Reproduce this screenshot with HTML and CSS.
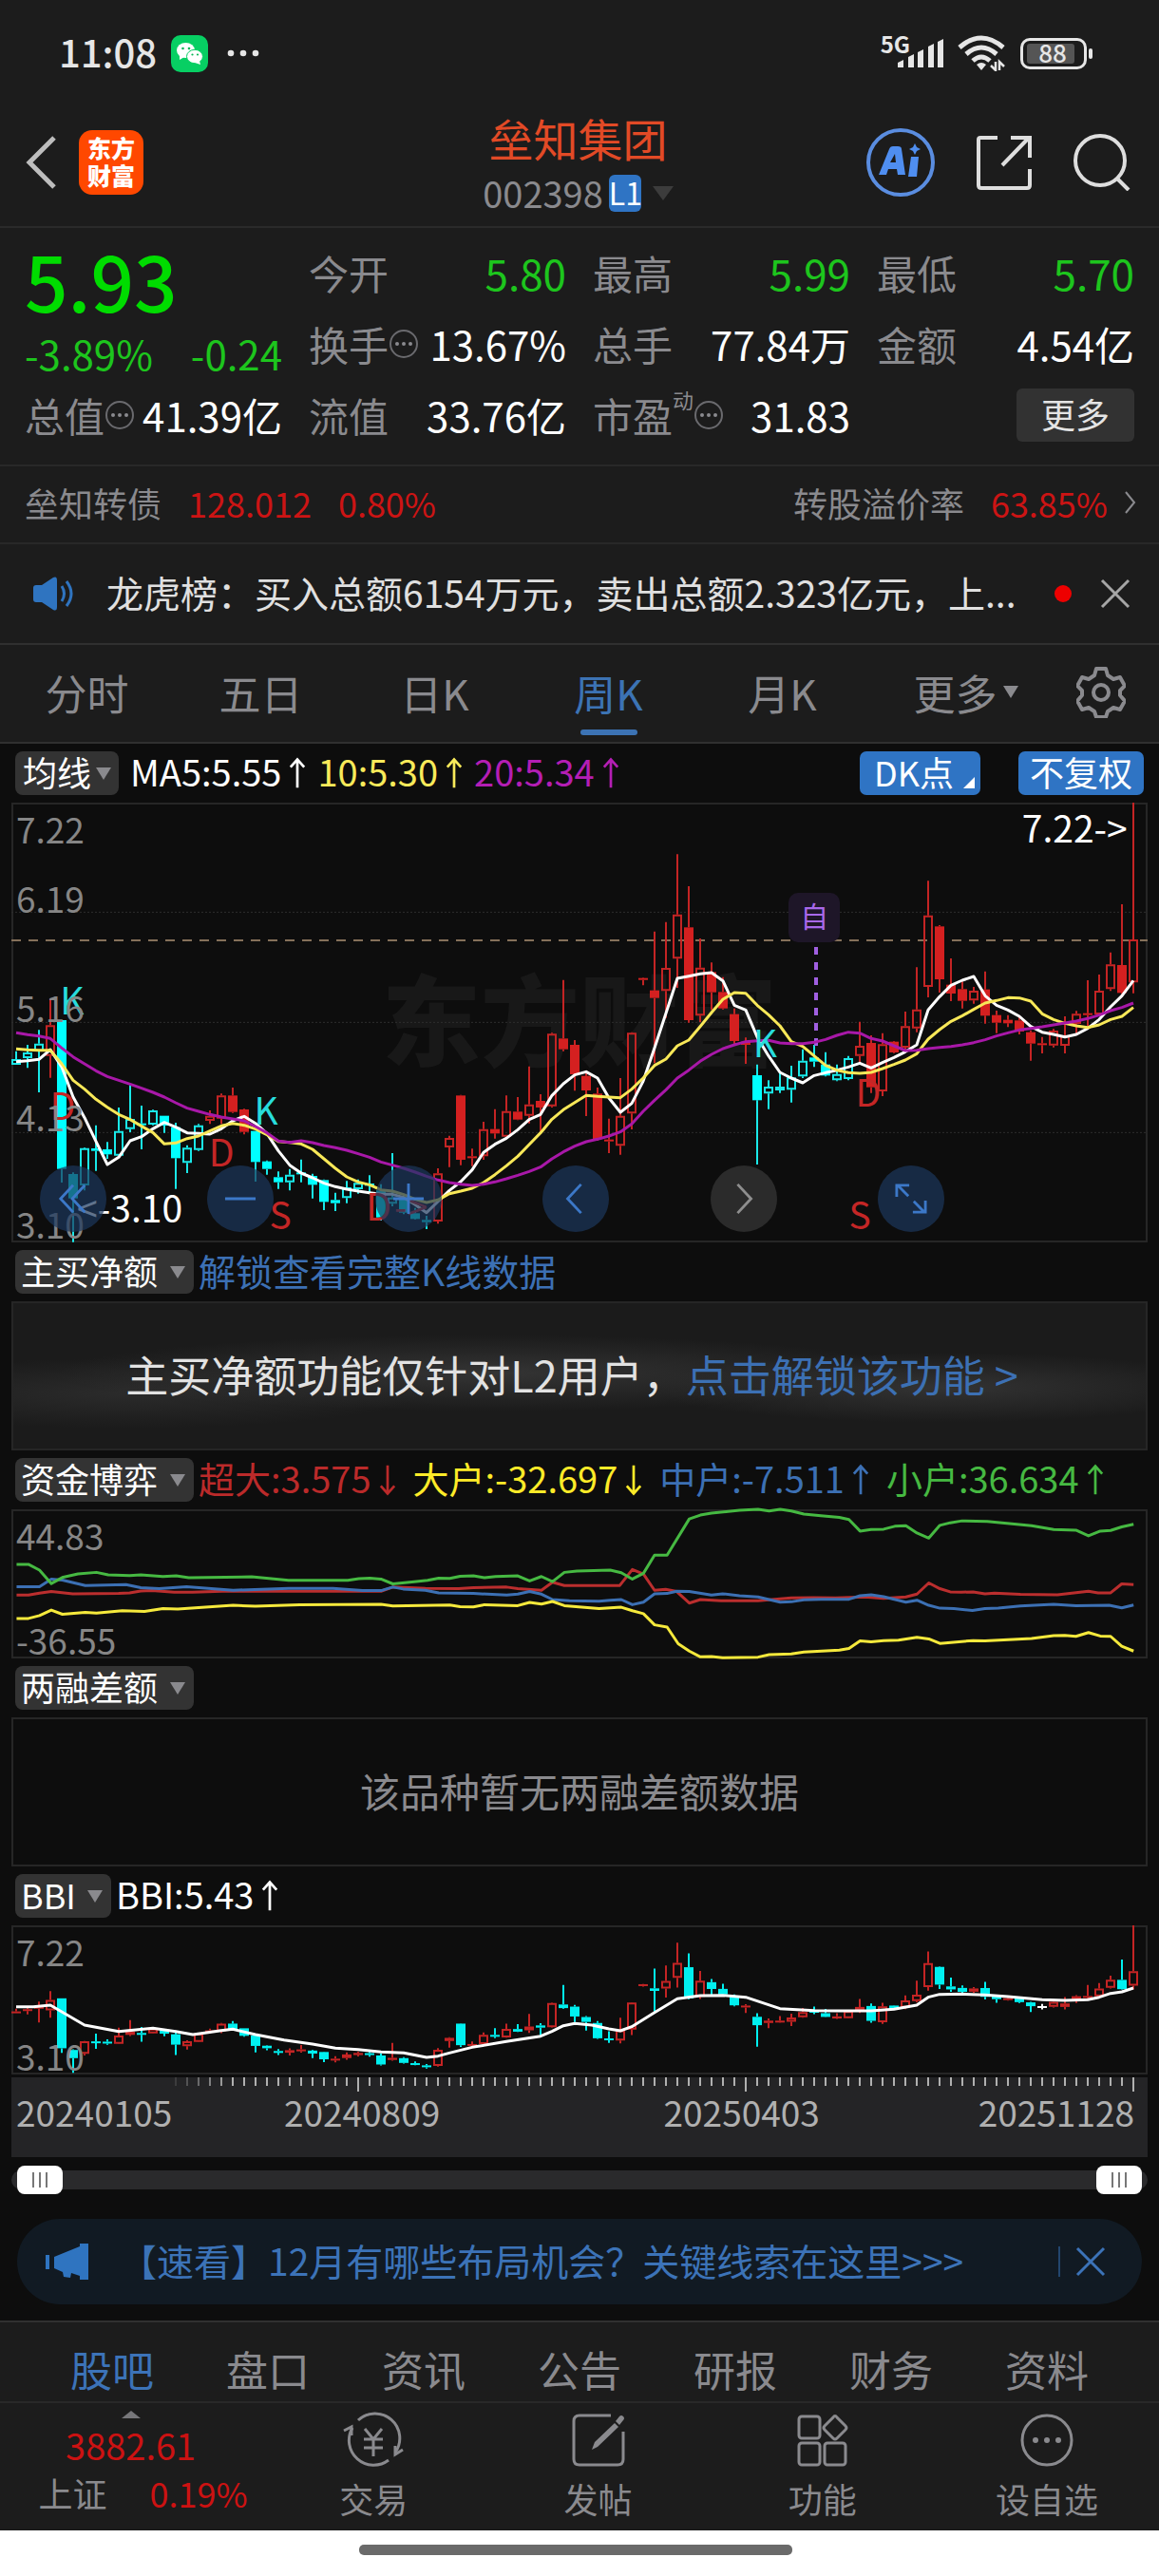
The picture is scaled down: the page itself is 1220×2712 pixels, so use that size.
FILE: index.html
```html
<!DOCTYPE html>
<html lang="zh-CN">
<head>
<meta charset="utf-8">
<meta name="viewport" content="width=device-width, initial-scale=1">
<title>垒知集团 002398</title>
<link rel="stylesheet" href="styles.css">
</head>
<body>
<svg class="defs" aria-hidden="true">
  <symbol id="up" viewBox="0 0 20 36"><path d="M10 35V2M2 11l8-9 8 9" fill="none" stroke="currentColor" stroke-width="3"/></symbol>
  <symbol id="down" viewBox="0 0 20 36"><path d="M10 1v33M2 25l8 9 8-9" fill="none" stroke="currentColor" stroke-width="3"/></symbol>
  <symbol id="info" viewBox="0 0 32 32"><circle cx="16" cy="16" r="14" fill="none" stroke="currentColor" stroke-width="2"/><circle cx="9" cy="16" r="2"/><circle cx="16" cy="16" r="2"/><circle cx="23" cy="16" r="2"/></symbol>
  <symbol id="close" viewBox="0 0 32 32"><path d="M2 2l28 28M30 2L2 30" fill="none" stroke="currentColor" stroke-width="3"/></symbol>
</svg>

<div class="statusbar">
  <span class="clock">11:08</span>
  <svg class="wechat" viewBox="0 0 39 39"><rect width="39" height="39" rx="10" fill="#07cf63"/><ellipse cx="15.500" cy="16" rx="9.500" ry="8" fill="#fff"/><path d="M9 21l0 5 5-3z" fill="#fff"/><ellipse cx="25" cy="22.500" rx="8.500" ry="7.200" fill="#fff" stroke="#07cf63"/><path d="M30 27l1 4-6-2z" fill="#fff"/><g fill="#07b757"><circle cx="12.500" cy="14" r="1.300"/><circle cx="19" cy="14" r="1.300"/><circle cx="22.500" cy="20.500" r="1.100"/><circle cx="28" cy="20.500" r="1.100"/></g></svg>
  <svg class="dots" viewBox="0 0 34 8" fill="#e6e6e6"><circle cx="4" cy="4" r="3.300"/><circle cx="17" cy="4" r="3.300"/><circle cx="30" cy="4" r="3.300"/></svg>
  <span class="net">5G</span>
  <svg class="signal" viewBox="0 0 50 32" fill="#e6e6e6"><path d="M1 31v-5l6-3v8zM12 31V20l6-3v14zM22 31V15l6-3v19zM33 31V9l6-3v25zM43 31V4l6-3v30z"/></svg>
  <svg class="wifi" viewBox="0 0 50 38"><g fill="none" stroke="#e6e6e6" stroke-width="5"><path d="M2 13Q25-7 48 13"/><path d="M9 20q16-14 32 0"/><path d="M16 27q9-8 18 0"/></g><path d="M20 31q5-4 10 0l-5 6z" fill="#e6e6e6"/><path d="M40 28v9l-5-5M44 37v-9l5 5" fill="none" stroke="#e6e6e6" stroke-width="2.500"/></svg>
  <span class="battery"><span class="battery-body"><span class="battery-fill"></span><span class="battery-num">88</span></span><i class="battery-cap"></i></span>
</div>

<header class="header">
  <div class="header-left">
    <button class="plain" aria-label="返回"><svg class="back" viewBox="0 0 32 56"><path d="M30 2L4 28l26 26" fill="none" stroke="#bdbdbd" stroke-width="5"/></svg></button>
    <a class="logo" href="#home"><span>东方</span><span>财富</span></a>
  </div>
  <div class="header-title">
    <h1>垒知集团</h1>
    <div class="code"><span>002398</span><b>L1</b><i class="tri tri-dim"></i></div>
  </div>
  <div class="header-right">
    <button class="plain" aria-label="Ai"><svg class="ico-ai" viewBox="0 0 72 72"><circle cx="36" cy="36" r="34" fill="none" stroke="#5a8de0" stroke-width="4"/><path fill-rule="evenodd" d="M13 49L24 22q1-3 4-3h5q4 0 4 3l4 27h-8l-1-6h-9l-2 6zM25 36h6l-1-9z" fill="#4f8ef0"/><path d="M47 30h8l-2 21h-9z" fill="#4f8ef0"/><path d="M51 16l2 4 4 2-4 2-2 4-2-4-4-2 4-2z" fill="#4f8ef0"/></svg></button>
    <button class="plain" aria-label="分享"><svg class="ico-share" viewBox="0 0 58 58"><path d="M22 3H4q-2 0-2 2v48q0 3 3 3h48q3 0 3-3V36M56 24V3H36M55 3L27 32" fill="none" stroke="#dedede" stroke-width="4"/></svg></button>
    <button class="plain" aria-label="搜索"><svg class="ico-search" viewBox="0 0 60 60"><circle cx="28" cy="28" r="26" fill="none" stroke="#dedede" stroke-width="4"/><path d="M46 47l12 12" stroke="#dedede" stroke-width="4"/></svg></button>
  </div>
</header>

<main>
<section class="quote">
  <div class="price-cell">
    <strong>5.93</strong>
    <p><span>-3.89%</span><span>-0.24</span></p>
  </div>
  <div class="cell"><span>今开</span><em class="green">5.80</em></div>
  <div class="cell"><span>最高</span><em class="green">5.99</em></div>
  <div class="cell"><span>最低</span><em class="green">5.70</em></div>
  <div class="cell"><span>换手<svg class="info"><use href="#info"/></svg></span><em>13.67%</em></div>
  <div class="cell"><span>总手</span><em>77.84万</em></div>
  <div class="cell"><span>金额</span><em>4.54亿</em></div>
  <div class="cell"><span>总值<svg class="info"><use href="#info"/></svg></span><em>41.39亿</em></div>
  <div class="cell"><span>流值</span><em>33.76亿</em></div>
  <div class="cell"><span>市盈<sup>动</sup><svg class="info"><use href="#info"/></svg></span><em>31.83</em></div>
  <div class="cell cell-more"><button class="more">更多</button></div>
</section>

<a class="bond" href="#bond">
  <span>垒知转债</span><em>128.012</em><em>0.80%</em>
  <span class="push">转股溢价率</span><em>63.85%</em>
  <svg class="chev" viewBox="0 0 12 24"><path d="M1 1l9 11-9 11" fill="none" stroke="#8a8a8e" stroke-width="2"/></svg>
</a>

<section class="news">
  <svg class="speaker" viewBox="0 0 44 36"><path d="M1 12q0-3 3-3h6L22 1q4-2 4 3v28q0 5-4 3L10 27H4q-3 0-3-3z" fill="#2f74c0"/><path d="M31 10q5 8 0 16M36 5q10 13 0 26" fill="none" stroke="#2f74c0" stroke-width="3"/></svg>
  <a href="#news">龙虎榜：买入总额6154万元，卖出总额2.323亿元，上...</a>
  <i class="dot"></i>
  <button class="plain news-close" aria-label="关闭"><svg><use href="#close"/></svg></button>
</section>

<nav class="period">
  <button>分时</button><button>五日</button><button>日K</button><button class="on">周K</button><button>月K</button>
  <button class="period-more">更多<i class="tri tri-small"></i></button>
  <button aria-label="设置"><svg class="gear" viewBox="0 0 52 54"><path d="M21 2h10l2 7 6 4 7-2 5 9-5 5v5l5 6-5 9-7-2-6 4-2 6H21l-2-6-6-4-7 2-5-9 5-6v-5l-5-5 5-9 7 2 6-4z" fill="none" stroke="#8a8a8e" stroke-width="4" stroke-linejoin="round"/><circle cx="26" cy="27" r="8" fill="none" stroke="#8a8a8e" stroke-width="4"/></svg></button>
</nav>

<section class="charts">
  <div class="bar">
    <label class="chip chip-tight"><select aria-label="主图指标"><option>均线</option></select></label>
    <span class="ma"><span class="c-white">MA5:5.55<svg class="arr"><use href="#up"/></svg></span><span class="c-yellow">10:5.30<svg class="arr"><use href="#up"/></svg></span><span class="c-purple">20:5.34<svg class="arr"><use href="#up"/></svg></span></span>
    <button class="blue dk">DK点</button>
    <button class="blue">不复权</button>
  </div>

  <div class="box main-box">
    <div class="watermark">东方财富</div>
    <svg id="kline" class="plot" viewBox="0 0 1196 463" preserveAspectRatio="none"></svg>
    <div id="marks"></div>
    <span class="axis a1">7.22</span><span class="axis a2">6.19</span><span class="axis a3">5.16</span><span class="axis a4">4.13</span><span class="axis bottom">3.10</span>
    <div class="tools">
      <button aria-label="最早"><svg viewBox="0 0 36 36"><path d="M18 3L4 18l14 15M31 3L17 18l14 15"/></svg></button>
      <button aria-label="缩小"><svg viewBox="0 0 36 36"><path d="M1 18h34"/></svg></button>
      <button aria-label="放大"><svg viewBox="0 0 36 36"><path d="M1 18h34M18 1v34"/></svg></button>
      <button aria-label="左移"><svg viewBox="0 0 36 36"><path d="M24 2L9 18l15 16"/></svg></button>
      <button class="off" aria-label="右移"><svg viewBox="0 0 36 36"><path d="M11 2l15 16-15 16"/></svg></button>
      <button aria-label="全屏"><svg viewBox="0 0 36 36"><path d="M2 16V3h14M3 3l12 12M34 20v13H20M33 33L21 21"/></svg></button>
    </div>
  </div>

  <div class="bar">
    <label class="chip"><select aria-label="副图指标一"><option>主买净额</option></select></label>
    <a class="unlock" href="#unlock">解锁查看完整K线数据</a>
  </div>
  <div class="box lock-box">主买净额功能仅针对L2用户，<a href="#unlock">点击解锁该功能 &gt;</a></div>

  <div class="bar">
    <label class="chip"><select aria-label="副图指标二"><option>资金博弈</option></select></label>
    <span class="fund"><span class="c-red">超大:3.575<svg class="arr"><use href="#down"/></svg></span><span class="c-yellow2">大户:-32.697<svg class="arr"><use href="#down"/></svg></span><span class="c-blue">中户:-7.511<svg class="arr"><use href="#up"/></svg></span><span class="c-green">小户:36.634<svg class="arr"><use href="#up"/></svg></span></span>
  </div>
  <div class="box">
    <svg class="plot lines" viewBox="15 60 1537 466" preserveAspectRatio="none">
      <polyline stroke="#bb2e2e" points="22,328 38,328 53,322 69,317 98,324 160,323 175,321 190,315 205,314 235,319 260,319 300,316 515,316 531,303 575,307 620,308 640,305 685,303 700,308 732,313 747,288 763,298 838,298 855,248 870,262 885,313 900,310 915,317 932,353 947,342 975,346 1025,346 1070,337 1100,336 1130,337 1170,334 1195,338 1225,334 1240,325 1256,290 1271,308 1285,318 1300,319 1316,318 1332,324 1345,322 1380,326 1430,327 1472,316 1485,321 1502,321 1517,293 1533,295"/>
      <polyline stroke="#3c70b4" points="22,302 53,302 69,278 84,281 115,298 170,295 190,305 215,308 252,302 315,313 390,307 450,307 490,314 515,314 531,303 545,309 575,313 593,321 640,323 685,328 700,325 716,317 732,325 747,342 770,346 810,347 825,344 840,342 855,358 870,350 885,324 902,323 915,316 932,317 962,328 977,324 1000,330 1025,334 1055,350 1070,349 1087,343 1110,341 1148,341 1163,330 1178,327 1195,333 1225,350 1240,344 1256,360 1271,369 1290,370 1315,376 1332,370 1350,369 1380,362 1425,357 1455,361 1500,360 1517,368 1533,359"/>
      <polyline stroke="#46b942" points="22,232 38,232 53,250 69,292 85,272 105,262 130,257 146,265 175,267 190,265 220,270 238,268 255,274 340,271 390,282 470,282 485,277 500,275 515,278 531,293 560,286 578,282 593,275 608,276 622,269 640,268 655,274 670,270 700,268 716,284 732,270 747,286 763,257 780,253 825,250 840,258 855,278 870,260 885,203 902,203 932,90 947,78 962,72 1000,63 1025,60 1040,65 1055,60 1070,65 1087,75 1110,80 1135,85 1148,92 1163,128 1178,123 1195,122 1210,113 1225,111 1240,134 1256,150 1271,110 1285,102 1301,96 1335,98 1395,111 1425,123 1455,125 1472,143 1488,128 1502,126 1517,115 1533,107"/>
      <polyline stroke="#f5e93c" points="22,401 38,401 53,392 69,375 84,388 115,382 130,384 165,377 195,379 220,370 240,372 315,360 345,363 405,358 515,357 531,362 608,359 622,364 640,365 655,358 700,361 716,351 732,356 747,348 763,361 810,370 840,366 855,377 870,386 885,421 902,428 917,480 932,503 947,521 962,520 977,524 1025,522 1040,514 1070,512 1087,506 1135,500 1148,495 1163,471 1178,474 1195,470 1215,469 1240,460 1256,465 1271,479 1316,470 1332,471 1395,464 1425,455 1440,454 1455,457 1472,445 1488,456 1502,457 1517,488 1533,503"/>
    </svg>
    <span class="axis a1">44.83</span><span class="axis bottom">-36.55</span>
  </div>

  <div class="bar"><label class="chip"><select aria-label="副图指标三"><option>两融差额</option></select></label></div>
  <div class="box empty-box">该品种暂无两融差额数据</div>

  <div class="bar">
    <label class="chip"><select aria-label="副图指标四"><option>BBI</option></select></label>
    <span class="c-white bbi">BBI:5.43<svg class="arr"><use href="#up"/></svg></span>
  </div>
  <div class="box">
    <svg id="bbi" class="plot" viewBox="0 0 1196 157" preserveAspectRatio="none"></svg>
    <span class="axis a1">7.22</span><span class="axis bottom">3.10</span>
  </div>

  <div class="timeline">
    <svg id="ticks" viewBox="0 0 1196 18" preserveAspectRatio="none"></svg>
    <div class="dates"><time>20240105</time><time>20240809</time><time>20250403</time><time>20251128</time></div>
  </div>
  <div class="range"><input type="range" aria-label="起始日期" value="0"><input type="range" aria-label="结束日期" value="100"></div>

  <div class="banner">
    <svg class="horn" viewBox="0 0 46 40"><path d="M9 15L36 4V1h9v38h-9v-4l-9-3-1 5-7-1-1-5-9-4zM0 13h4v15H0z" fill="#2f74c0"/></svg>
    <a href="#hot">【速看】12月有哪些布局机会？关键线索在这里&gt;&gt;&gt;</a>
    <button class="plain banner-close" aria-label="关闭"><svg><use href="#close"/></svg></button>
  </div>
</section>
</main>

<footer>
  <nav class="tabs"><a class="on" href="#guba">股吧</a><a href="#pankou">盘口</a><a href="#zixun">资讯</a><a href="#gonggao">公告</a><a href="#yanbao">研报</a><a href="#caiwu">财务</a><a href="#ziliao">资料</a></nav>
  <nav class="actions">
    <a class="index" href="#index"><i class="tri-up"></i><strong>3882.61</strong><span>上证<em>0.19%</em></span></a>
    <a href="#trade"><svg viewBox="0 0 66 58"><g fill="none" stroke="#8a8a8e" stroke-width="3"><path d="M17 8A26 26 0 0 1 56 42M49 50A26 26 0 0 1 11 16"/><path d="M2 19l8-4v9M64 39l-8 5v-9"/><path d="M24 17l9 11 9-11M33 28v18M23 28h20M23 37h20"/></g></svg>交易</a>
    <a href="#post"><svg viewBox="0 0 66 58"><path d="M46 3H13q-6 0-6 6v40q0 6 6 6h40q6 0 6-6V20" fill="none" stroke="#8a8a8e" stroke-width="3"/><path d="M26 39l3-8L50 11l4 4-22 21zM51 9l4-5q2-2 4 0t0 4l-4 5z" fill="#8a8a8e"/></svg>发帖</a>
    <a href="#tools"><svg viewBox="0 0 66 58"><g fill="none" stroke="#8a8a8e" stroke-width="3"><rect x="8" y="4" width="22" height="23" rx="3"/><rect x="8" y="32" width="22" height="23" rx="3"/><rect x="35" y="32" width="22" height="23" rx="3"/><path d="M44 5q2-3 4 0l9 9q2 2 0 4l-9 9q-2 2-4 0l-9-9q-2-2 0-4z"/></g></svg>功能</a>
    <a href="#watch"><svg viewBox="0 0 66 58"><circle cx="33" cy="29" r="26" fill="none" stroke="#8a8a8e" stroke-width="3"/><g fill="#8a8a8e"><circle cx="21" cy="29" r="3"/><circle cx="33" cy="29" r="3"/><circle cx="45" cy="29" r="3"/></g></svg>设自选</a>
  </nav>
</footer>
<div class="home"><i></i></div>
<script src="chart.js"></script>
</body>
</html>
```
FILE: styles.css
```css
* { box-sizing: border-box; }
html { background: #fff; }
body {
  margin: 0;
  background: #1c1c1c;
  color: #fff;
  font-family: "Noto Sans CJK SC", "Noto Sans", sans-serif;
  font-size: 36px;
  line-height: 48px;
}
button, select, input { font: inherit; color: inherit; border: 0; margin: 0; padding: 0; background: none; }
button { white-space: nowrap; }
a { color: inherit; text-decoration: none; }
em, i, time { font-style: normal; }
h1, p { margin: 0; font-weight: 400; }
svg { display: block; }
.defs { position: absolute; width: 0; height: 0; }
.plain { display: flex; }

.statusbar { display: flex; align-items: center; height: 110px; padding: 2px 70px 0 62px; color: #e6e6e6; }
.clock { font-size: 40px; font-weight: 500; width: 118px; padding-bottom: 4px; }
.wechat { width: 39px; height: 39px; }
.dots { width: 34px; height: 8px; margin-left: 20px; }
.net { margin-left: auto; font-size: 24px; line-height: 24px; font-weight: 700; padding-bottom: 20px; }
.signal { width: 50px; height: 32px; margin-left: -14px; }
.wifi { width: 50px; height: 38px; margin: 0 16px 0 14px; }
.battery { display: flex; align-items: center; gap: 2px; }
.battery-body { display: grid; width: 70px; height: 33px; border: 3px solid #e6e6e6; border-radius: 10px; padding: 3px 10px 3px 4px; }
.battery-fill, .battery-num { grid-area: 1 / 1; }
.battery-fill { background: #555; border-radius: 3px; }
.battery-num { font-size: 26px; line-height: 18px; font-weight: 500; text-align: center; padding-left: 4px; }
.battery-cap { width: 4px; height: 11px; border-radius: 2px; background: #e6e6e6; }

.header { display: grid; grid-template-columns: 1fr auto 1fr; align-items: center; height: 130px; padding: 0 30px 0 27px; border-bottom: 2px solid #2a2a2a; }
.header-left { display: flex; align-items: center; gap: 24px; padding-bottom: 6px; }
.back { width: 32px; height: 56px; }
.logo { display: flex; flex-direction: column; justify-content: center; align-items: center; width: 68px; height: 68px; border-radius: 14px; background: #ff4800; font-size: 25px; line-height: 29px; font-weight: 900; padding-bottom: 3px; }
.header-title { text-align: center; padding-bottom: 2px; }
.header-title h1 { font-size: 47px; line-height: 60px; color: #e24a26; }
.code { display: flex; align-items: center; justify-content: center; gap: 6px; font-size: 38px; line-height: 56px; color: #8a8a8e; }
.code b { width: 34px; height: 39px; border-radius: 6px; background: #2f74c4; color: #fff; font-size: 32px; line-height: 36px; font-weight: 400; }
.header-right { display: flex; align-items: center; justify-content: flex-end; gap: 44px; padding-bottom: 6px; }
.ico-ai { width: 72px; height: 72px; }
.ico-share { width: 58px; height: 58px; }
.ico-search { width: 60px; height: 60px; }

.tri { display: inline-block; border: 8px solid transparent; border-top: 13px solid #8a8a8e; border-bottom: 0; }
.tri-dim { border-width: 11px; border-top: 15px solid #3c3c3c; border-bottom: 0; margin-left: 6px; }
.tri-small { margin-left: 6px; }

.quote { display: grid; grid-template-columns: repeat(4, 1fr); grid-auto-rows: 75px; column-gap: 28px; padding: 9px 26px 15px; font-size: 42px; line-height: 56px; border-bottom: 2px solid #282828; }
.price-cell { grid-row: span 2; color: #1dc51d; padding-top: 3px; }
.price-cell strong { display: block; font-size: 80px; line-height: 84px; font-weight: 500; color: #00dc00; }
.price-cell p { display: flex; justify-content: space-between; margin-top: 8px; }
.cell { display: flex; align-items: center; justify-content: space-between; white-space: nowrap; }
.cell > span { display: flex; align-items: center; color: #8a8a8e; }
.cell sup { font-size: 22px; line-height: 22px; align-self: flex-start; }
.green { color: #1dc51d; font-size: 44px; }
.info { width: 32px; height: 32px; fill: #8a8a8e; color: #6a6a6e; }
.cell-more { justify-content: flex-end; }
.more { width: 124px; height: 56px; border-radius: 6px; background: #323232; color: #e4e4e4; font-size: 36px; line-height: 50px; padding-bottom: 4px; }

.bond { display: flex; align-items: center; gap: 28px; height: 82px; padding: 0 24px 4px 26px; color: #8a8a8e; border-bottom: 2px solid #282828; white-space: nowrap; }
.bond em { color: #cc1414; }
.push { margin-left: auto; }
.chev { width: 12px; height: 24px; margin-left: -10px; }

.news { display: flex; align-items: center; height: 106px; padding: 0 30px 0 34px; border-bottom: 2px solid #303030; color: #e0e0e0; font-size: 39px; }
.speaker { width: 44px; height: 36px; margin-right: 34px; flex: none; }
.news a { flex: 1; white-space: nowrap; padding-bottom: 5px; }
.dot { width: 18px; height: 18px; border-radius: 50%; background: #ee0000; margin: 0 30px; flex: none; }
.news-close svg { width: 32px; height: 32px; color: #a6a6a6; }

.period { display: grid; grid-template-columns: repeat(6, 3fr) 2fr; height: 104px; border-bottom: 2px solid #303030; color: #8a8a8e; font-size: 44px; }
.period button { display: flex; align-items: center; justify-content: center; padding-bottom: 3px; }
.period .period-more { padding-left: 20px; }
.period .on { color: #3c73b4; position: relative; }
.period .on::after { content: ""; position: absolute; left: calc(50% - 30px); bottom: 7px; width: 60px; height: 6px; border-radius: 3px; background: #3c73b4; }
.gear { width: 52px; height: 54px; }

.charts { background: #0d0d0d; padding: 0 12px 17px; }
.bar { display: flex; align-items: center; height: 62px; padding: 0 4px; white-space: nowrap; }
.chip { display: inline-flex; align-items: center; height: 46px; padding: 0 9px 0 6px; gap: 12px; border-radius: 8px; background: #333; margin-right: 5px; }
.chip::after { content: ""; border: 8px solid transparent; border-top: 13px solid #8a8a8e; border-bottom: 0; }
.chip select { appearance: none; height: 46px; line-height: 42px; padding-bottom: 4px; }
.chip-tight { gap: 4px; padding: 0 8px; margin-right: 12px; }
.ma { display: flex; gap: 12px; flex: 1; font-size: 38px; padding-bottom: 4px; }
.ma > span, .fund > span, .bbi { display: flex; align-items: center; gap: 8px; }
.arr { width: 18px; height: 34px; margin-top: 4px; }
.c-white { color: #fff; }
.c-yellow { color: #f8ea5a; }
.c-yellow2 { color: #ffeb28; }
.c-purple { color: #b41eb4; }
.c-red { color: #bb2a2a; }
.c-blue { color: #3c70b4; }
.c-green { color: #46b942; }
.blue { position: relative; height: 46px; line-height: 42px; border-radius: 7px; background: #2f74c4; padding: 0 12px 4px; }
.dk { padding: 0 28px 4px 15px; margin-right: 40px; }
.dk::after { content: ""; position: absolute; right: 6px; bottom: 7px; border-left: 12px solid transparent; border-bottom: 12px solid #fff; }
.unlock { color: #3c70b4; font-size: 39px; padding-bottom: 4px; }
.fund { display: flex; gap: 18px; font-size: 38px; padding-bottom: 4px; }
.bbi { font-size: 38px; padding-bottom: 4px; }

.box { position: relative; height: 157px; border: 2px solid #262626; }
.main-box { height: 463px; }
.plot { position: absolute; inset: -2px; width: calc(100% + 4px); height: calc(100% + 4px); overflow: visible; }
.plot * { vector-effect: non-scaling-stroke; }
.plot polyline { fill: none; stroke-width: 3px; stroke-linejoin: round; }
.grid { stroke: #2e2e2e; stroke-dasharray: 2 2; }
.now { stroke: #85705a; stroke-width: 2px; stroke-dasharray: 10 8; }
.added { stroke: #a05fe0; stroke-width: 4px; stroke-dasharray: 8 8; }
.watermark { display: flex; height: 100%; align-items: center; justify-content: center; color: #181818; font-size: 104px; font-weight: 900; padding-bottom: 14px; }
.axis { position: absolute; left: 3px; line-height: 40px; font-size: 37px; color: #868686; }
.a1 { top: 5px; }
.a2 { top: 78px; }
.a3 { top: 193px; }
.a4 { top: 308px; }
.axis.bottom { bottom: -2px; }
.mark { position: absolute; transform: translate(-50%, -50%); font-size: 39px; line-height: 40px; padding-bottom: 4px; white-space: nowrap; }
.mark.k { color: #28dcdc; }
.mark.d { color: #c42626; }
.mark.tag { width: 54px; height: 52px; line-height: 46px; font-size: 30px; text-align: center; border-radius: 10px; background: #1e1628; color: #a868ea; }
.tools { position: absolute; left: 28px; bottom: 9px; width: calc(100% - 240px); display: flex; justify-content: space-between; }
.tools button { display: flex; align-items: center; justify-content: center; width: 70px; height: 70px; border-radius: 50%; background: rgba(28, 56, 92, .7); color: #3c78c8; }
.tools .off { background: #2b2b2b; color: #8e8e8e; }
.tools svg { width: 34px; height: 34px; fill: none; stroke: currentColor; stroke-width: 3px; }

.lock-box { display: flex; align-items: center; justify-content: center; padding: 0 16px 4px 0; font-size: 45px; color: #e2e2e2; white-space: nowrap; background: radial-gradient(ellipse 38% 26% at 42% 48%, #343434, transparent), radial-gradient(ellipse 26% 24% at 82% 58%, #333, transparent), radial-gradient(ellipse 26% 24% at 10% 62%, #2b2b2b, transparent), #1b1b1b; }
.lock-box a { color: #3c70b4; }
.empty-box { display: flex; align-items: center; justify-content: center; font-size: 42px; color: #8a8a8e; padding-bottom: 4px; }
.timeline { margin-top: 3px; height: 84px; background: #242426; color: #b0b0b0; }
.timeline svg { width: 100%; height: 18px; }
.dates { display: grid; grid-template-columns: 162fr 408fr 408fr 218fr; font-size: 37px; line-height: 36px; padding: 0 14px 0 5px; }
.dates time { text-align: center; white-space: nowrap; }
.dates time:first-child { text-align: left; }
.dates time:last-child { text-align: right; }
.range { display: flex; align-items: center; height: 20px; margin-top: 14px; padding: 0 6px; border-radius: 10px; background: #2a2a2c; }
.range input { appearance: none; flex: 1; width: 0; height: 30px; background: none; }
.range input::-webkit-slider-thumb { appearance: none; width: 48px; height: 30px; border-radius: 8px; background: linear-gradient(90deg, #777 2px, transparent 2px 7px, #777 7px 9px, transparent 9px 14px, #777 14px) 16px 7px / 16px 16px no-repeat #fff; }
.banner { display: flex; align-items: center; height: 90px; margin: 31px 6px 0; padding: 0 38px 0 30px; border-radius: 45px; background: #111a23; color: #3c73b8; font-size: 39px; white-space: nowrap; }
.horn { width: 46px; height: 40px; margin-right: 32px; }
.banner a { flex: 1; padding-bottom: 5px; }
.banner-close { padding-left: 16px; border-left: 2px solid #22466e; }
.banner-close svg { width: 32px; height: 32px; }

footer { border-top: 2px solid #303030; color: #8a8a8e; }
.tabs { display: grid; grid-template-columns: repeat(7, 1fr); padding: 14px 36px 0; height: 85px; align-items: center; font-size: 44px; text-align: center; border-bottom: 2px solid #282828; }
.tabs .on { color: #3c73b8; }
.actions { display: grid; grid-template-columns: 275fr repeat(4, 236fr); height: 134px; }
.actions a { display: flex; flex-direction: column; align-items: center; }
.actions a > svg { width: 66px; height: 58px; margin: 10px 0 8px; overflow: visible; }
.actions .index strong { font-size: 38px; line-height: 48px; font-weight: 400; color: #cc1212; margin-top: 4px; }
.index span { display: flex; width: 246px; padding-left: 26px; justify-content: space-between; line-height: 52px; }
.index em { color: #cc1212; }
.tri-up { border: 10px solid transparent; border-bottom: 8px solid #77777a; border-top: 0; margin-top: 8px; }
.home { display: flex; justify-content: center; height: 48px; background: #fff; padding: 15px 8px 0 0; }
.home i { width: 456px; height: 11px; border-radius: 5px; background: #6a6a6a; }
```
FILE: chart.js
```js
// Weekly bars: body top, body bottom, high, low, direction (u up, d down, f flat).
// Levels run from TOP (7.22) down to BOTTOM (3.10).
const TOP = 15, BOTTOM = 1401, STEP = 12, FIRST = 5;
const bars = `825 843 800 843 u|804 822 780 853 u|776 800 733 930 u|718 815 635 884 u|702 1172 702 1215 d|1188 1265 1183 1403 d|1106 1224 1104 1240 u|1107 1115 1034 1178 d|1110 1126 1087 1140 d|1052 1130 978 1132 u
1014 1046 907 1056 u|1028 1034 972 1110 d|987 1032 985 1034 u|1004 1035 1004 1058 d|1040 1138 1026 1235 d|1105 1153 1097 1185 u|1034 1112 1030 1115 u|1004 1020 987 1030 u|940 1013 934 1030 u|940 992 915 995 d
984 1055 982 1063 d|1052 1150 1052 1212 d|1148 1172 1145 1190 d|1198 1214 1180 1235 d|1190 1214 1172 1240 u|1183 1189 1142 1214 u|1194 1222 1187 1265 d|1207 1276 1205 1302 d|1270 1280 1247 1305 u|1230 1264 1210 1280 u
1216 1236 1205 1250 u|1218 1225 1192 1252 d|1240 1325 1220 1335 d|1262 1282 1122 1290 u|1265 1310 1255 1315 d|1312 1330 1295 1332 d|1333 1340 1320 1362 d|1186 1338 1170 1345 u|1074 1104 1067 1166 u|940 1143 938 1160 d
1132 1138 1108 1163 u|1046 1132 1023 1143 u|1046 1060 983 1076 d|989 1070 940 1072 u|991 1016 945 1018 d|968 1004 848 1028 u|957 978 936 1055 d|745 974 742 978 u|760 794 575 800 d|780 873 765 925 d
878 924 870 1005 d|934 1078 915 1083 d|1079 1085 1013 1122 d|1004 1099 885 1127 u|742 997 740 1047 u|569 575 568 592 u|608 632 422 838 d|537 610 392 695 u|368 508 178 600 u|409 702 279 710 d
536 688 444 708 u|550 614 520 670 d|613 665 566 668 d|683 768 665 778 d|770 780 757 840 u|876 955 842 1158 d|912 934 892 983 u|912 924 868 932 u|883 922 846 962 u|830 880 794 885 u
820 833 780 850 d|842 877 803 880 d|872 892 842 895 u|822 888 815 892 u|783 815 707 840 u|774 914 750 932 d|778 927 743 942 u|770 804 768 806 d|721 789 675 805 u|668 728 535 740 u
371 597 262 630 u|406 573 402 615 d|590 618 507 642 d|604 641 580 665 d|609 640 597 650 u|605 688 548 713 d|686 710 672 743 d|701 712 686 724 u|703 738 692 747 d|740 776 735 830 d
775 781 755 807 f|735 782 730 788 u|750 783 690 807 u|682 714 673 745 u|680 686 576 720 u|609 684 558 690 u|526 604 488 610 u|528 616 336 620 d|447 583 15 617 u`
  .split(/[|\n]/).map(s => { const p = s.trim().split(' '); return { t: +p[0], b: +p[1], h: +p[2], l: +p[3], dir: p[4] }; });

const ma5 = [833,830,826,795,850,945,1010,1085,1158,1135,1083,1070,1045,1025,1040,1058,1060,1062,1045,1020,1006,1028,1060,1115,1160,1185,1200,1217,1228,1236,1242,1247,1252,1252,1262,1285,1310,1275,1240,1212,1175,1120,1094,1075,1048,1016,1000,940,903,875,865,885,948,993,965,895,790,680,570,563,556,552,578,655,670,755,815,867,885,900,877,868,860,850,838,853,836,820,802,780,670,628,592,576,564,625,655,670,690,722,740,747,755,747,728,700,660,625,577];
const ma10 = [793,796,797,797,840,892,920,952,977,1000,1016,1037,1057,1093,1090,1076,1068,1052,1036,1028,1034,1046,1064,1085,1088,1093,1110,1140,1170,1197,1213,1222,1238,1242,1253,1268,1278,1270,1250,1242,1233,1215,1190,1162,1132,1095,1058,1015,985,962,940,943,945,947,920,885,845,825,783,765,722,678,636,615,617,655,685,720,770,785,815,845,860,868,870,867,855,842,828,808,762,732,706,688,668,648,640,631,632,642,682,700,712,720,725,717,700,690,662];
const ma20 = [742,748,752,760,790,818,840,862,880,892,904,917,930,945,963,980,990,1000,1008,1014,1020,1038,1058,1084,1088,1083,1089,1098,1105,1113,1124,1135,1150,1160,1170,1182,1195,1207,1215,1220,1224,1220,1213,1203,1192,1180,1166,1140,1118,1100,1086,1078,1068,1055,1030,990,955,922,885,860,832,810,792,780,770,767,766,774,776,776,772,763,750,740,743,760,768,783,798,797,792,788,785,780,773,764,752,742,733,728,723,717,711,705,697,686,672,662,648];
// BBI line as pairs of bar index and depth inside its own pane (0 to 463).
const bbi = [[0,257],[1.5,257],[3,252],[4,273],[6,315],[9,335],[12,325],[14,335],[15.5,345],[18,332],[19,328],[21,345],[23.5,362],[26,375],[28,388],[30,392],[32,400],[34,403],[36,417],[37,413],[38,403],[40,385],[43,367],[46,350],[47,335],[48,317],[49,310],[50.5,315],[52,327],[53,333],[54,320],[56,275],[58,232],[60,222],[62,221],[64,227],[67,263],[70,269],[72,270],[75,270],[77,265],[79,252],[80,227],[81,218],[83,217],[85,220],[87,225],[90,235],[92,237],[94,235],[95,227],[96,215],[97,210],[98,198]];

const CYAN = '#19e8e8', RED = '#c42424';
const inBearPhase = i => i < 3 || (i > 3 && i < 17) || (i > 20 && i < 37) || (i > 64 && i < 74);
const x = i => FIRST + STEP * i;

function drawBars(y, color, bodyFill) {
  return bars.map((k, i) => {
    const c = color(k, i), t = y(k.t), b = Math.max(y(k.b), t + 2), solid = k.dir !== 'u' || b - t < 4;
    const fill = solid ? bodyFill(c) : 'none', inset = solid ? 0 : 1;
    return `<path d="M${x(i)} ${y(k.h)}V${t}M${x(i)} ${b}V${y(k.l)}" stroke="${c}" stroke-width="2"/>` +
      `<rect x="${x(i) - 5 + inset}" y="${t + inset}" width="${10 - 2 * inset}" height="${b - t - 2 * inset}" fill="${fill}" stroke="${solid ? 'none' : c}" stroke-width="2"/>`;
  }).join('');
}
const line = (pts, color) => `<polyline stroke="${color}" points="${pts.join(' ')}"/>`;

const yMain = v => (v - TOP) * 462 / (BOTTOM - TOP);
const hLine = (v, cls) => `<line class="${cls}" x1="0" x2="1196" y1="${yMain(v)}" y2="${yMain(v)}"/>`;
document.getElementById('kline').innerHTML =
  [361, 709, 1057].map(v => hLine(v, 'grid')).join('') + hLine(450, 'now') +
  drawBars(yMain, (k, i) => inBearPhase(i) ? CYAN : RED, c => c === CYAN ? '#00ffff' : '#d42020') +
  `<line class="added" x1="847" x2="847" y1="152" y2="256"/>` +
  [[ma5, '#ffffff'], [ma10, '#f8e858'], [ma20, '#a818a8']]
    .map(([m, c]) => line(m.map((v, i) => `${x(i)},${yMain(v)}`), c)).join('');

const yBbi = v => (v - TOP) * 155 / (BOTTOM - TOP);
document.getElementById('bbi').innerHTML =
  drawBars(yBbi, k => ({ u: RED, d: '#00f0f0', f: '#ffffff' })[k.dir], c => c) +
  line(bbi.map(([i, v]) => `${x(i)},${v / 3}`), '#ffffff');

// Signals: text, kind, position inside the 1196 x 463 pane.
document.getElementById('marks').innerHTML = [
  ['K', 'k', 62, 208], ['D', 'd', 52, 320], ['K', 'k', 267, 325], ['D', 'd', 220, 369], ['S', 'd', 282, 436],
  ['D', 'd', 386, 427], ['->', 'd', 420, 427], ['K', 'k', 794, 253], ['D', 'd', 903, 306], ['S', 'd', 894, 436],
  ['&lt;-3.10', 'w', 123, 429], ['7.22-&gt;', 'w', 1121, 25], ['自', 'tag', 846, 120]
].map(([t, c, l, top]) => `<span class="mark ${c}" style="left:${l / 11.96}%;top:${top / 4.63}%">${t}</span>`).join('');

let ticks = '';
for (let i = 14; i < 99; i++) {
  const major = i % 34 === 30;
  ticks += `<path d="M${x(i)} 0V${major ? 15 : 9}" stroke="#b0b0b0" stroke-width="2" opacity="${Math.min(1, (i - 13) / 6)}"/>`;
}
document.getElementById('ticks').innerHTML = ticks;
```
